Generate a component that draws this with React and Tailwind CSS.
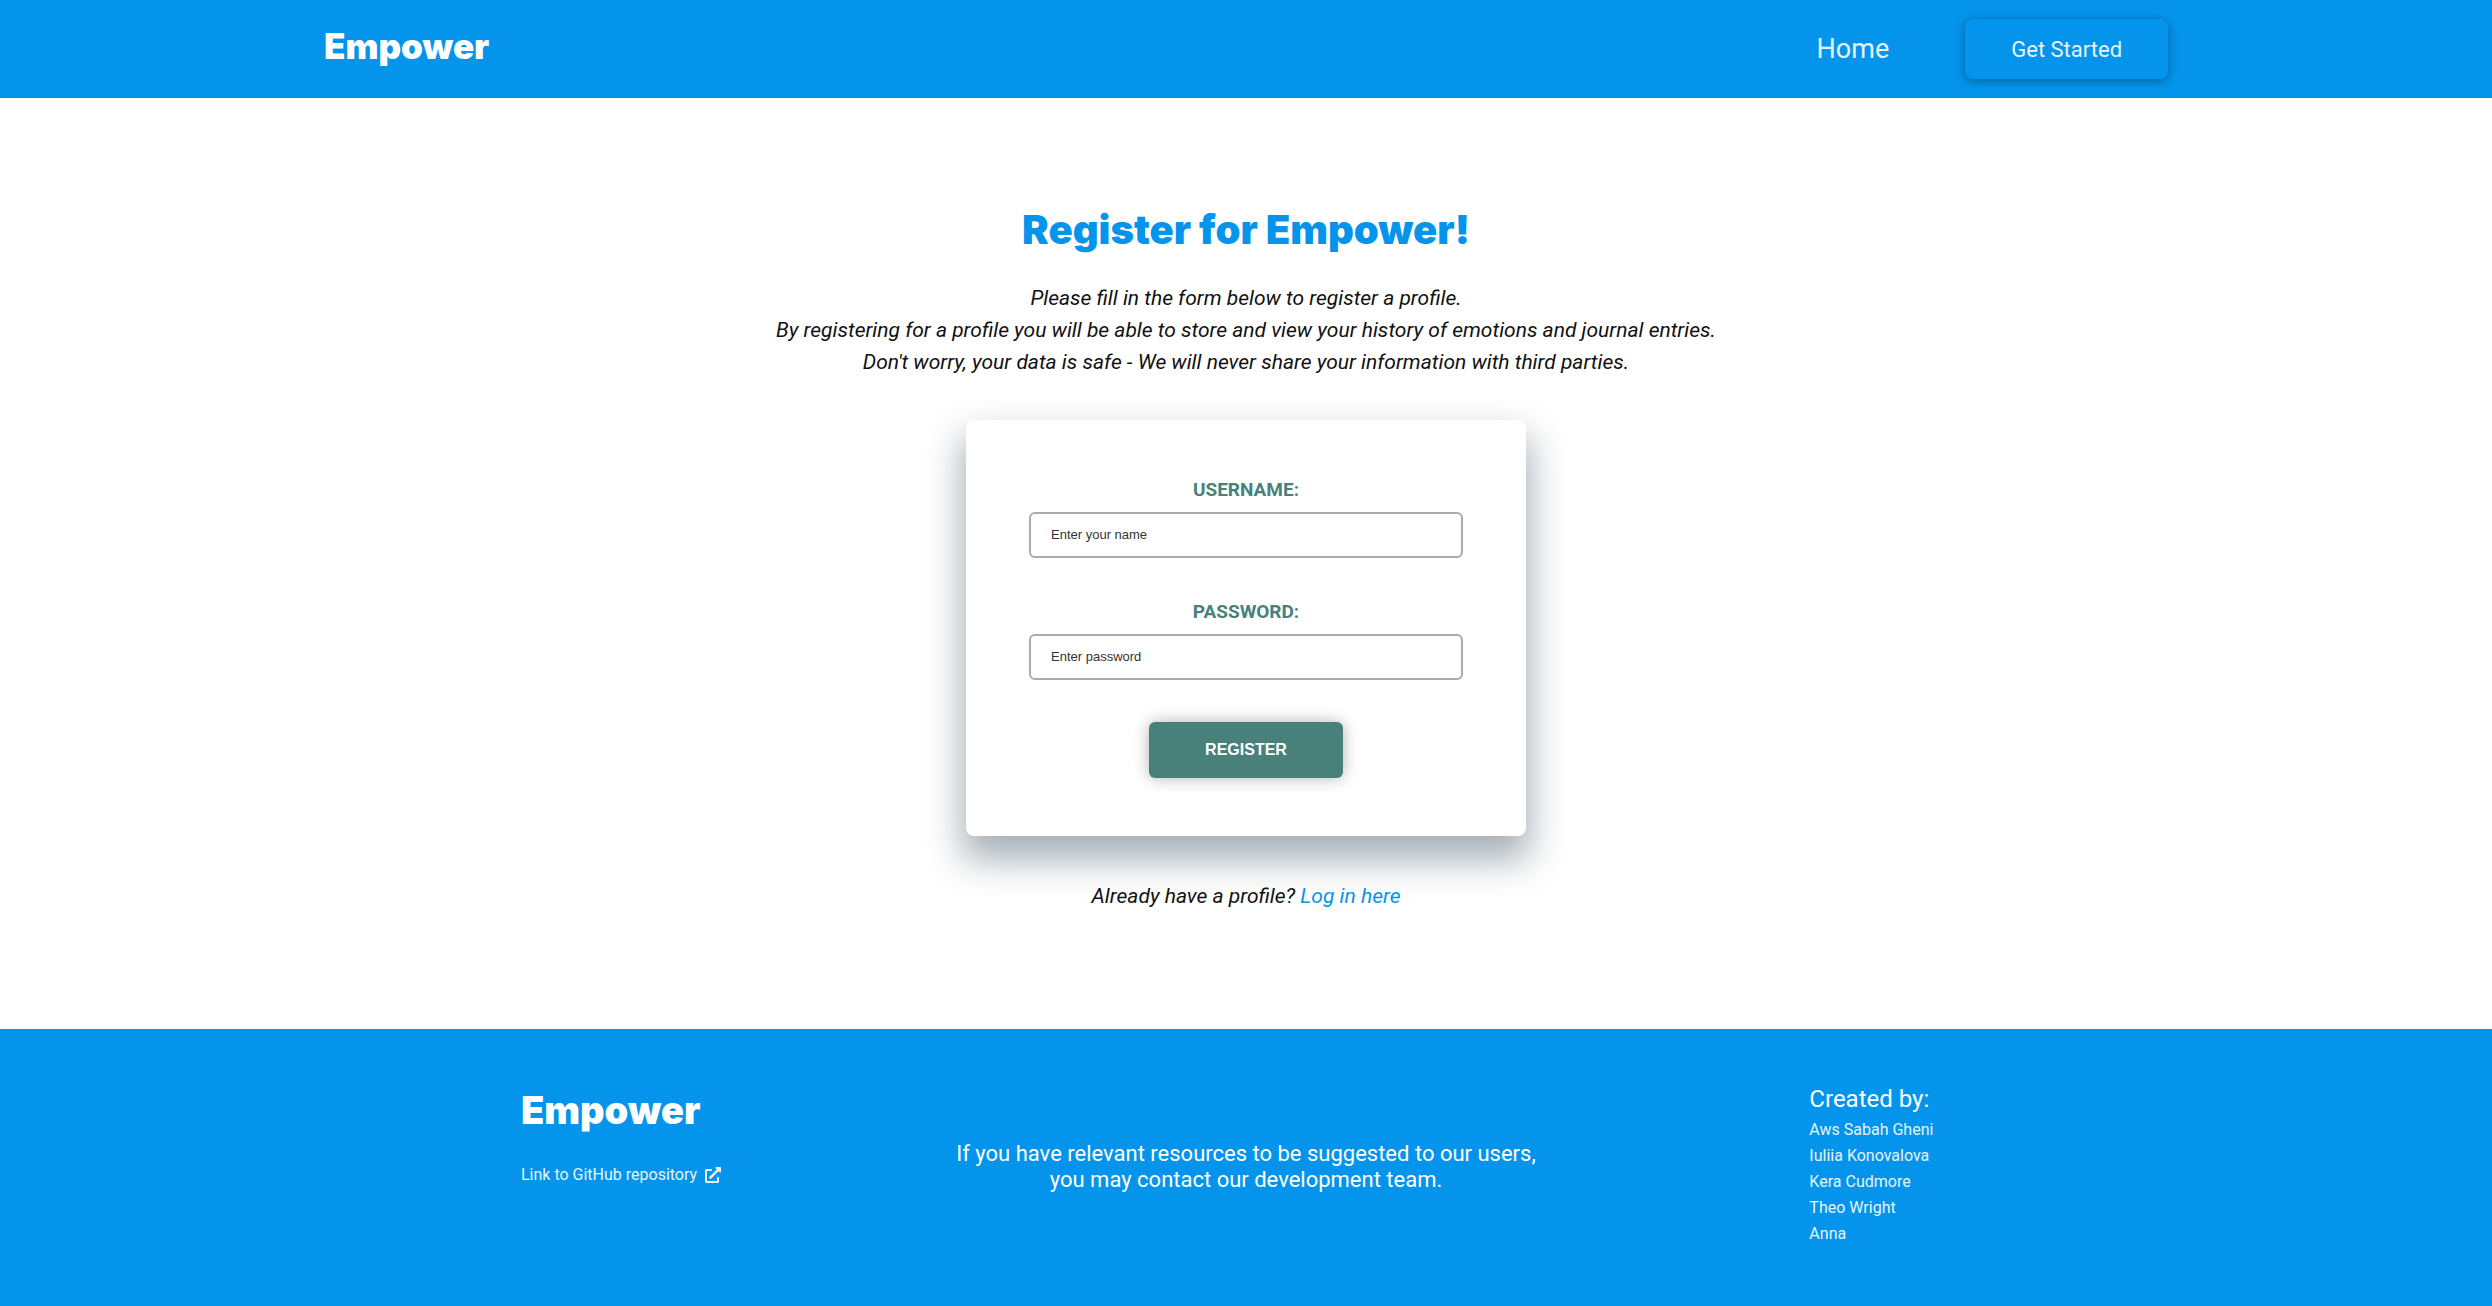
import { FaExternalLinkAlt } from "react-icons/fa";

const authors = ["Aws Sabah Gheni", "Iuliia Konovalova", "Kera Cudmore", "Theo Wright", "Anna"];

function Field({ id, label, type, placeholder }) {
  return (
    <div className="flex flex-col items-center">
      <label htmlFor={id} className="mb-[10px] text-[19px] leading-6 font-bold text-[#47817a]">
        {label}
      </label>
      <input
        id={id}
        type={type}
        placeholder={placeholder}
        className="w-full rounded-md border-2 border-[#aaaaaa] bg-white px-5 py-3 font-['Liberation_Sans',sans-serif] text-[13px] leading-[18px] placeholder:text-[#333333]"
      />
    </div>
  );
}

function Header() {
  return (
    <header className="flex items-center justify-between bg-[#0594ec] px-[13%] py-[19px] text-[#e6f4fd]">
      <a href="#" className="self-start font-['Inter',sans-serif] text-[35px] leading-[54px] font-black text-white">
        Empower
      </a>
      <nav className="flex items-center gap-19">
        <a href="#" className="text-[27px] leading-[60px]">
          Home
        </a>
        <a
          href="#"
          className="rounded-lg px-[46px] pt-[2px] text-[22px] leading-[58px] shadow-[0_2px_10px_rgba(0,0,0,0.35)]"
        >
          Get Started
        </a>
      </nav>
    </header>
  );
}

function Footer() {
  return (
    <footer className="flex flex-1 justify-between bg-[#0594ec] px-[13%] pt-14 text-[#e6f4fd]">
      <div className="flex w-1/3 flex-col items-start pl-[197px]">
        <a href="#" className="mb-7 font-['Inter',sans-serif] text-[38px] leading-[50px] font-black text-white">
          Empower
        </a>
        <a href="#" className="flex items-center gap-2 text-base leading-6">
          Link to GitHub repository
          <FaExternalLinkAlt className="size-4" />
        </a>
      </div>
      <p className="w-1/3 pt-14 text-center text-[22px] leading-[26px] text-white">
        If you have relevant resources to be suggested to our users,
        <br />
        you may contact our development team.
      </p>
      <div className="w-1/3 pl-[256px]">
        <h2 className="mb-1 text-2xl leading-7 text-white">Created by:</h2>
        <ul>
          {authors.map((name) => (
            <li key={name} className="text-base leading-[26px]">
              <a href="#">{name}</a>
            </li>
          ))}
        </ul>
      </div>
    </footer>
  );
}

export default function App() {
  return (
    <div className="flex min-h-screen flex-col bg-white font-['Roboto',sans-serif]">
      <Header />
      <main className="flex flex-col items-center px-4 pt-[102px] pb-[117px] text-center text-[21px] leading-8 text-[#111111]">
        <h1 className="mb-[22px] font-['Inter',sans-serif] text-[40px] leading-[60px] font-black text-[#0594ec]">
          Register for Empower!
        </h1>
        <p className="italic">
          Please fill in the form below to register a profile.
          <br />
          By registering for a profile you will be able to store and view your history of emotions and journal entries.
          <br />
          Don't worry, your data is safe - We will never share your information with third parties.
        </p>
        <form
          onSubmit={(e) => e.preventDefault()}
          className="mt-[42px] mb-11 flex w-full max-w-[560px] flex-col gap-[42px] rounded-lg bg-white px-[63px] py-[58px] shadow-[0_20px_36px_4px_rgba(0,30,50,0.35)]"
        >
          <Field id="username" label="USERNAME:" type="text" placeholder="Enter your name" />
          <Field id="password" label="PASSWORD:" type="password" placeholder="Enter password" />
          <button
            type="submit"
            className="w-[194px] self-center rounded-md bg-[#47817a] py-4 font-['Liberation_Sans',sans-serif] text-base leading-6 font-bold text-white shadow-[0_0_16px_rgba(0,0,0,0.3)]"
          >
            REGISTER
          </button>
        </form>
        <p className="italic">
          Already have a profile?{" "}
          <a href="#" className="text-[#0594ec]">
            Log in here
          </a>
        </p>
      </main>
      <Footer />
    </div>
  );
}
